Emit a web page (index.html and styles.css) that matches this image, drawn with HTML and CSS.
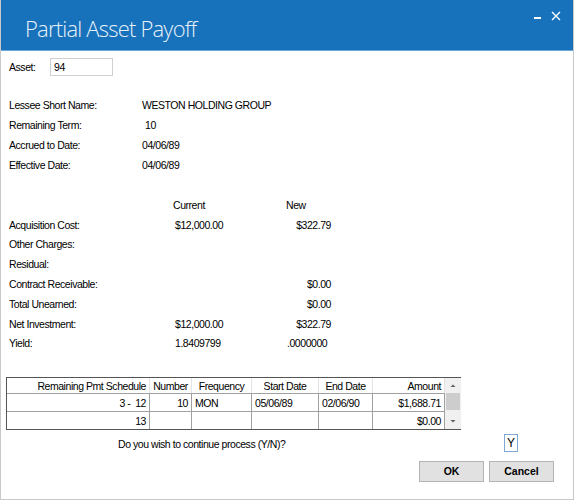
FILE: index.html
```html
<!DOCTYPE html>
<html>
<head>
  <meta charset="UTF-8">
  <title>Partial Asset Payoff</title>
  <link rel="stylesheet" href="styles.css">
</head>
<body>
<div class="window">
  <div class="titlebar">
    <div class="title">Partial Asset Payoff</div>
    <div class="winbtns">
      <span class="minbtn"></span>
      <svg class="closebtn" width="10" height="10" viewBox="0 0 10 10"><path d="M1 1L9 9M9 1L1 9" stroke="#fff" stroke-width="1.4"/></svg>
    </div>
  </div>

  <div class="content">
    <div class="assetrow">
      <span class="assetlabel">Asset:</span>
      <div class="textbox">94</div>
    </div>

    <div class="info">
      <div>Lessee Short Name:</div><div>WESTON HOLDING GROUP</div>
      <div>Remaining Term:</div><div class="term">10</div>
      <div>Accrued to Date:</div><div>04/06/89</div>
      <div>Effective Date:</div><div>04/06/89</div>
    </div>

    <div class="money">
      <div></div><div class="head">Current</div><div class="head">New</div>
      <div>Acquisition Cost:</div><div class="cur">$12,000.00</div><div class="new">$322.79</div>
      <div>Other Charges:</div><div></div><div></div>
      <div>Residual:</div><div></div><div></div>
      <div>Contract Receivable:</div><div></div><div class="new">$0.00</div>
      <div>Total Unearned:</div><div></div><div class="new">$0.00</div>
      <div>Net Investment:</div><div class="cur">$12,000.00</div><div class="new">$322.79</div>
      <div>Yield:</div><div class="cur">1.8409799</div><div class="yield">.0000000</div>
    </div>

    <div class="gridbox">
      <table class="sched">
        <tr class="hdr">
          <th class="c1 r">Remaining Pmt Schedule</th>
          <th class="c2">Number</th>
          <th class="c3">Frequency</th>
          <th class="c4">Start Date</th>
          <th class="c5">End Date</th>
          <th class="c6 r">Amount</th>
        </tr>
        <tr>
          <td class="r">3 -&nbsp; 12</td>
          <td class="r">10</td>
          <td>MON</td>
          <td>05/06/89</td>
          <td>02/06/90</td>
          <td class="r">$1,688.71</td>
        </tr>
        <tr>
          <td class="r">13</td>
          <td></td>
          <td></td>
          <td></td>
          <td></td>
          <td class="r">$0.00</td>
        </tr>
      </table>
      <div class="vscroll">
        <svg class="arrow" width="16" height="15" viewBox="0 0 16 15"><path d="M5.5 9L8 6.5L10.5 9Z" fill="#606060"/></svg>
        <div class="thumb"></div>
        <div class="track"></div>
        <svg class="arrow" width="16" height="15" viewBox="0 0 16 15"><path d="M5.5 6L8 8.5L10.5 6Z" fill="#606060"/></svg>
      </div>
    </div>

    <div class="prompt">
      <span class="question">Do you wish to continue process (Y/N)?</span>
      <div class="answer">Y</div>
    </div>

    <div class="buttons">
      <div class="btn">OK</div>
      <div class="btn">Cancel</div>
    </div>
  </div>
</div>
</body>
</html>
```

FILE: styles.css
```css
html, body {
  margin: 0;
  padding: 0;
  background-color: #ffffff;
}

body {
  font-family: "Liberation Sans", Arial, sans-serif;
  font-size: 10.5px;
  letter-spacing: -0.45px;
  color: #000000;
}

.window {
  width: 572px;
  height: 499px;
  border: 1px solid #c9c9c9;
  border-top: none;
  background-color: #ffffff;
}

.titlebar {
  height: 50px;
  background-color: #1771bb;
  border-bottom: 1px solid #6aa6d9;
  display: flex;
  justify-content: space-between;
  color: #ffffff;
}

.title {
  font-family: "Open Sans", "Noto Sans", sans-serif;
  font-weight: 300;
  font-size: 22px;
  letter-spacing: -0.8px;
  color: #e8f1fa;
  padding: 13px 0 0 24px;
}

.winbtns {
  display: flex;
  align-items: flex-start;
  gap: 10px;
  padding: 10px 12px 0 0;
}

.minbtn {
  width: 7px;
  height: 2px;
  background-color: #ffffff;
  margin-top: 7px;
}

.closebtn {
  margin-top: 1px;
}

.content {
  padding: 7px 0 0 8px;
}

.assetrow {
  display: flex;
  align-items: center;
  height: 18px;
}

.assetlabel {
  width: 41px;
}

.textbox {
  width: 58px;
  height: 16px;
  line-height: 16px;
  border: 1px solid #d0d0d0;
  padding-left: 3px;
}

.info {
  display: grid;
  grid-template-columns: 133px auto;
  grid-auto-rows: 20px;
  align-items: center;
  margin-top: 19px;
}

.term {
  padding-left: 3px;
}

.money {
  display: grid;
  grid-template-columns: 164px 113px 45px;
  grid-auto-rows: 19.8px;
  align-items: center;
  margin-top: 20px;
}

.money .cur {
  padding-left: 2px;
}

.money .new {
  text-align: right;
}

.yield {
  padding-left: 1px;
}

.gridbox {
  display: flex;
  width: 453px;
  margin: 24px 0 0 -3px;
  border: 1px solid #555555;
}

.sched {
  border-collapse: collapse;
  width: 438px;
  table-layout: fixed;
}

.sched th, .sched td {
  font-weight: normal;
  height: 17px;
  padding: 0 3px;
  white-space: nowrap;
  overflow: hidden;
  border-right: 1px solid #a0a0a0;
  border-bottom: 1px solid #a0a0a0;
  text-align: left;
}

.sched th {
  height: 15px;
  text-align: center;
  border-right-color: #e3e3e3;
  border-bottom-color: #a0a0a0;
}

.sched tr:last-child td {
  border-bottom: none;
}

.sched th.r, .sched td.r {
  text-align: right;
}

.c1 { width: 136px; }
.c2 { width: 35px; }
.c3 { width: 53px; }
.c4 { width: 60px; }
.c5 { width: 47px; }
.c6 { width: 65px; }

.vscroll {
  width: 16px;
  background-color: #f0f0f0;
  display: flex;
  flex-direction: column;
}

.thumb {
  height: 17px;
  margin: 0 1px;
  background-color: #cdcdcd;
}

.track {
  flex: 1;
}

.prompt {
  display: flex;
  align-items: flex-start;
  margin-top: 4px;
  height: 19px;
}

.question {
  margin: 4px 0 0 109px;
  width: 386px;
}

.answer {
  width: 10px;
  height: 16px;
  line-height: 17px;
  border: 1px solid #7fa8d6;
  padding-left: 2px;
  font-size: 12px;
  letter-spacing: 0;
}

.buttons {
  display: flex;
  justify-content: flex-end;
  gap: 5px;
  margin: 8px 19px 0 0;
}

.btn {
  width: 63px;
  height: 19px;
  line-height: 19px;
  text-align: center;
  font-weight: bold;
  letter-spacing: 0;
  background-color: #e1e1e1;
  border: 1px solid #b4b4b4;
}
```
